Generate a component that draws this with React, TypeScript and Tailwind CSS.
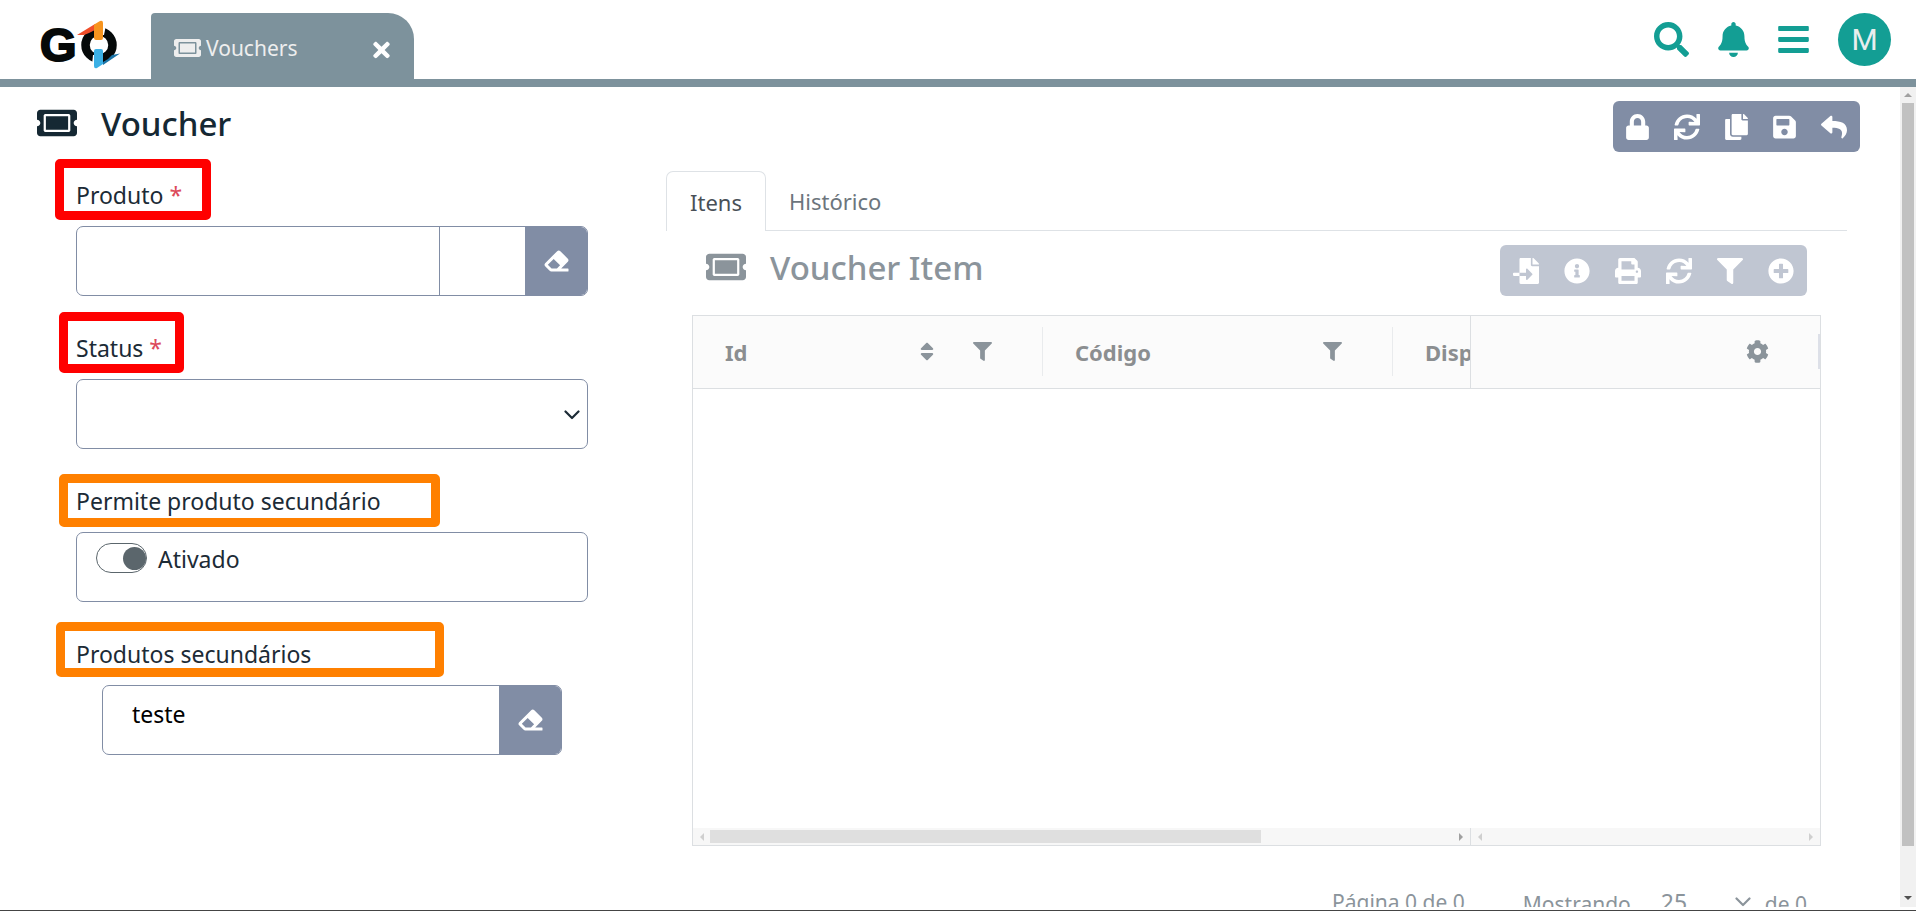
import type { ReactNode } from "react";
import {
  FaBars,
  FaBell,
  FaCog,
  FaCopy,
  FaEraser,
  FaFileImport,
  FaFilter,
  FaInfoCircle,
  FaLock,
  FaPlusCircle,
  FaPrint,
  FaReply,
  FaSave,
  FaSearch,
  FaSort,
  FaSync,
  FaTicketAlt,
  FaTimes,
} from "react-icons/fa";

function Logo() {
  return (
    <svg viewBox="0 0 80 50" className="h-[50px] w-20 overflow-visible" role="img" aria-label="GO">
      <text
        x="-2"
        y="42"
        fontFamily="'Liberation Sans', sans-serif"
        fontWeight="700"
        fontSize="47"
        fill="#050909"
        stroke="#050909"
        strokeWidth="2"
      >
        G
      </text>
      <circle cx="57" cy="26" r="13.5" fill="none" stroke="#050909" strokeWidth="8.5" />
      <path d="M61 6 L64 6 L62 16 L61 16 Z" fill="#ffffff" />
      <path d="M50 46 L52 46 L52 36 L51 36 Z" fill="#ffffff" />
      <path d="M35 16 L53 5 L53 11 L47 14 L42 16 Z" fill="#f04e2a" />
      <path d="M53 5 L58 2 Q61 1 61 4 L61 19 Q61 21 59 21 L54 21 Q52 21 52 19 L52 6 Z" fill="#f7941e" />
      <path d="M70 36 L78 34.5 L61 46 L61 43 L66 40 Z" fill="#1c75a8" />
      <path d="M54 30 L59 30 Q61 30 61 32 L61 45 L55 49 Q52 50 52 47 L52 32 Q52 30 54 30 Z" fill="#3bb0e5" />
    </svg>
  );
}

function ToolButton({ label, children }: { label: string; children: ReactNode }) {
  return (
    <button type="button" aria-label={label} className="flex items-center">
      {children}
    </button>
  );
}

function Header() {
  return (
    <header className="flex h-[87px] shrink-0 items-end border-b-8 border-[#7d929c]">
      <div className="flex h-full w-[151px] shrink-0 items-center pl-[42px] pt-2">
        <Logo />
      </div>
      <div className="flex h-[66px] w-[263px] items-center rounded-tl-[4px] rounded-tr-[26px] bg-[#7d929c] pl-[23px] pr-6 pt-1 text-[#eeeeee]">
        <FaTicketAlt className="h-6 w-[27px]" />
        <a href="#vouchers" className="ml-[5px] flex-1 text-[21px] leading-8">
          Vouchers
        </a>
        <button type="button" aria-label="Fechar aba" className="pt-1 text-white">
          <FaTimes className="h-6 w-[17px]" />
        </button>
      </div>
      <div className="ml-auto flex h-full items-center gap-[29px] pr-[25px] text-[#139e94]">
        <button type="button" aria-label="Pesquisar">
          <FaSearch className="size-[35px]" />
        </button>
        <button type="button" aria-label="Notificações">
          <FaBell className="h-[35px] w-[31px]" />
        </button>
        <button type="button" aria-label="Menu">
          <FaBars className="h-[35px] w-[31px]" />
        </button>
        <button
          type="button"
          aria-label="Conta"
          className="flex size-[53px] items-center justify-center rounded-full bg-[#139e94] font-['Roboto',sans-serif] text-[30px] text-[#e8eeee]"
        >
          M
        </button>
      </div>
    </header>
  );
}

function Highlight({ className }: { className: string }) {
  return <span aria-hidden="true" className={"pointer-events-none absolute rounded-[5px] border-[9px] " + className} />;
}

function EraseButton() {
  return (
    <button
      type="button"
      aria-label="Limpar"
      className="flex w-[62px] shrink-0 items-center justify-center bg-[#818da5] text-white"
    >
      <FaEraser className="h-6 w-[25px]" />
    </button>
  );
}

const box = "flex h-[70px] overflow-hidden rounded-[7px] border border-[#818da5] bg-white";
const labelRow = "relative flex h-[51px] w-fit items-center pb-3";

function VoucherForm() {
  return (
    <form className="w-[512px] shrink-0">
      <div className="mb-8">
        <div className={labelRow}>
          <Highlight className="-left-[21px] -top-4 h-[61px] w-[156px] border-[#ff0000]" />
          <label htmlFor="produto">
            Produto <span className="text-[#dc4a5b]">*</span>
          </label>
        </div>
        <div className={box}>
          <input id="produto" className="min-w-0 flex-1 px-4 outline-none" />
          <input aria-label="Código do produto" className="w-[86px] border-l border-[#818da5] px-2 outline-none" />
          <EraseButton />
        </div>
      </div>
      <div className="mb-8">
        <div className={labelRow}>
          <Highlight className="-left-[17px] -top-4 h-[61px] w-[125px] border-[#ff0000]" />
          <label htmlFor="status">
            Status <span className="text-[#dc4a5b]">*</span>
          </label>
        </div>
        <div className={box + " relative"}>
          <select id="status" className="w-full appearance-none px-4 outline-none">
            <option value="" />
          </select>
          <svg viewBox="0 0 16 10" className="pointer-events-none absolute right-[7px] top-[30px] h-[10px] w-4">
            <path d="M1.5 1.5 L8 8 L14.5 1.5" fill="none" stroke="#1c2b36" strokeWidth="2.2" strokeLinecap="round" strokeLinejoin="round" />
          </svg>
        </div>
      </div>
      <div className="mb-8">
        <div className={labelRow}>
          <Highlight className="-left-[17px] -top-[7px] h-[53px] w-[381px] border-[#ff8000]" />
          <label htmlFor="permite">Permite produto secundário</label>
        </div>
        <div className={box + " items-start gap-[11px] pl-[19px] pt-[10px]"}>
          <input
            id="permite"
            type="checkbox"
            role="switch"
            defaultChecked
            className="flex h-[30px] w-[51px] appearance-none items-center justify-end rounded-full border border-[#5b666c] before:size-[23px] before:rounded-full before:bg-[#5b666c]"
          />
          <span className="leading-8">Ativado</span>
        </div>
      </div>
      <div>
        <div className={labelRow}>
          <Highlight className="-left-5 -top-3 h-[55px] w-[388px] border-[#ff8000]" />
          <label htmlFor="secundarios">Produtos secundários</label>
        </div>
        <div className={box + " mx-[26px]"}>
          <input
            id="secundarios"
            defaultValue="teste"
            className="min-w-0 flex-1 pb-3 pl-[29px] text-black outline-none"
          />
          <EraseButton />
        </div>
      </div>
    </form>
  );
}

function Arrow({ className, d }: { className: string; d: string }) {
  return (
    <svg viewBox="0 0 8 8" className={"size-2 " + className}>
      <path d={d} fill="currentColor" />
    </svg>
  );
}

const leftArrow = "M6 0 L2 4 L6 8 Z";
const rightArrow = "M2 0 L6 4 L2 8 Z";

function ItemGrid() {
  return (
    <div className="flex h-[531px] flex-col border border-[#dcdfe2]">
      <table className="w-full table-fixed border-collapse text-[22px]">
        <thead>
          <tr className="h-[72px] border-b border-[#dcdfe2] bg-[#fbfbfb] text-left text-[#8b8e90]">
            <th scope="col" className="w-[350px] p-0">
              <div className="flex h-[49px] items-center border-r border-[#e9ebed] pl-8 pr-[50px]">
                <span className="flex-1">Id</span>
                <button type="button" aria-label="Ordenar Id" className="mr-[39px] text-[#8b949b]">
                  <FaSort className="h-[23px] w-[14px]" />
                </button>
                <button type="button" aria-label="Filtrar Id" className="text-[#8b949b]">
                  <FaFilter className="size-[19px]" />
                </button>
              </div>
            </th>
            <th scope="col" className="w-[350px] p-0">
              <div className="flex h-[49px] items-center border-r border-[#e9ebed] pl-8 pr-[50px]">
                <span className="flex-1">Código</span>
                <button type="button" aria-label="Filtrar Código" className="text-[#8b949b]">
                  <FaFilter className="size-[19px]" />
                </button>
              </div>
            </th>
            <th scope="col" className="overflow-hidden p-0 pl-8 whitespace-nowrap">
              Disponível
            </th>
            <th scope="col" className="w-[350px] border-l border-[#dcdfe2] p-0">
              <div className="flex h-[35px] items-center justify-end border-r-2 border-[#dde0e8] pr-[49px]">
                <button type="button" aria-label="Configurar colunas" className="text-[#8b949b]">
                  <FaCog className="size-[23px]" />
                </button>
              </div>
            </th>
          </tr>
        </thead>
      </table>
      <div className="mt-auto flex h-[17px] bg-[#f7f7f7]">
        <div className="flex flex-1 items-center px-[5px]">
          <Arrow className="text-[#cfcfcf]" d={leftArrow} />
          <div className="ml-1 h-[13px] w-[71.8%] bg-[#dfdfdf]" />
          <Arrow className="ml-auto text-[#a0a0a0]" d={rightArrow} />
        </div>
        <div className="flex w-[350px] items-center justify-between border-l border-[#dcdfe2] px-[5px] text-[#cfcfcf]">
          <Arrow className="" d={leftArrow} />
          <Arrow className="" d={rightArrow} />
        </div>
      </div>
    </div>
  );
}

function ItemsPanel() {
  return (
    <section className="min-w-0 flex-1">
      <div role="tablist" className="flex h-[60px] border-b border-[#dee2e6]">
        <button
          type="button"
          role="tab"
          aria-selected="true"
          className="-mb-px h-[60px] rounded-t-[7px] border border-b-0 border-[#dee2e6] bg-white px-[23px] text-[22px] text-[#495057]"
        >
          Itens
        </button>
        <button type="button" role="tab" aria-selected="false" className="px-[23px] text-[22px] text-[#6c757d]">
          Histórico
        </button>
      </div>
      <div className="px-[26px] pt-[14px]">
        <div className="flex items-start pl-[14px] pr-[14px] text-[#8b949b]">
          <FaTicketAlt className="mt-1 h-9 w-10" />
          <h2 className="ml-6 text-[33px] font-medium leading-[46px]">Voucher Item</h2>
          <div className="ml-auto flex h-[51px] items-center gap-[25px] rounded-[6px] bg-[#c0c6d2] px-[13px] text-white">
            <ToolButton label="Importar"><FaFileImport className="size-[26px]" /></ToolButton>
            <ToolButton label="Informações"><FaInfoCircle className="size-[26px]" /></ToolButton>
            <ToolButton label="Imprimir"><FaPrint className="size-[26px]" /></ToolButton>
            <ToolButton label="Atualizar"><FaSync className="size-[26px]" /></ToolButton>
            <ToolButton label="Filtrar"><FaFilter className="size-[26px]" /></ToolButton>
            <ToolButton label="Adicionar"><FaPlusCircle className="size-[26px]" /></ToolButton>
          </div>
        </div>
        <div className="mt-[19px]">
          <ItemGrid />
        </div>
        <div className="mt-9 flex items-center justify-end pr-[14px] text-[#8b949b]">
          <span className="mr-[58px] text-[21px]">Página 0 de 0</span>
          <label htmlFor="tamanho" className="mr-[30px] pt-1 text-[21px]">Mostrando</label>
          <span className="relative mr-[14px] flex w-[90px] items-center">
            <select id="tamanho" className="w-full appearance-none outline-none">
              <option>25</option>
            </select>
            <svg viewBox="0 0 16 10" className="pointer-events-none absolute right-0 h-[10px] w-4">
              <path d="M1.5 1.5 L8 8 L14.5 1.5" fill="none" stroke="currentColor" strokeWidth="2.2" strokeLinecap="round" strokeLinejoin="round" />
            </svg>
          </span>
          <span className="pt-1 text-[21px]">de 0</span>
        </div>
      </div>
    </section>
  );
}

export default function App() {
  return (
    <div className="flex h-screen flex-col overflow-hidden border-b border-[#444444] bg-white pb-[3px] font-['Noto_Sans',sans-serif] text-[23px] leading-9 text-[#1c2b36]">
      <Header />
      <div className="flex min-h-0 flex-1">
        <main className="min-w-0 flex-1 overflow-hidden pl-[37px] pr-10 pt-[14px]">
          <div className="flex items-start">
            <FaTicketAlt className="mt-1 h-9 w-10 text-[#152833]" />
            <h1 className="ml-6 text-[33px] font-medium leading-[46px] text-[#152833]">Voucher</h1>
            <div className="ml-auto flex h-[51px] items-center gap-[25px] rounded-[6px] bg-[#818da5] px-[13px] text-white">
              <ToolButton label="Bloquear"><FaLock className="h-[26px] w-[23px]" /></ToolButton>
              <ToolButton label="Atualizar"><FaSync className="size-[26px]" /></ToolButton>
              <ToolButton label="Copiar"><FaCopy className="h-[26px] w-[23px]" /></ToolButton>
              <ToolButton label="Salvar"><FaSave className="h-[26px] w-[23px]" /></ToolButton>
              <ToolButton label="Voltar"><FaReply className="size-[26px]" /></ToolButton>
            </div>
          </div>
          <div className="flex gap-[78px] pl-[39px] pr-[13px] pt-[19px]">
            <div className="pt-1"><VoucherForm /></div>
            <ItemsPanel />
          </div>
        </main>
        <div aria-hidden="true" className="flex w-4 flex-col items-center bg-[#f1f1f1]">
          <Arrow className="my-1 text-[#a0a0a0]" d="M0 6 L4 2 L8 6 Z" />
          <div className="w-3 flex-1 bg-[#c1c1c1]" />
          <Arrow className="mb-[5px] mt-[48px] text-[#505050]" d="M0 2 L4 6 L8 2 Z" />
        </div>
      </div>
    </div>
  );
}
